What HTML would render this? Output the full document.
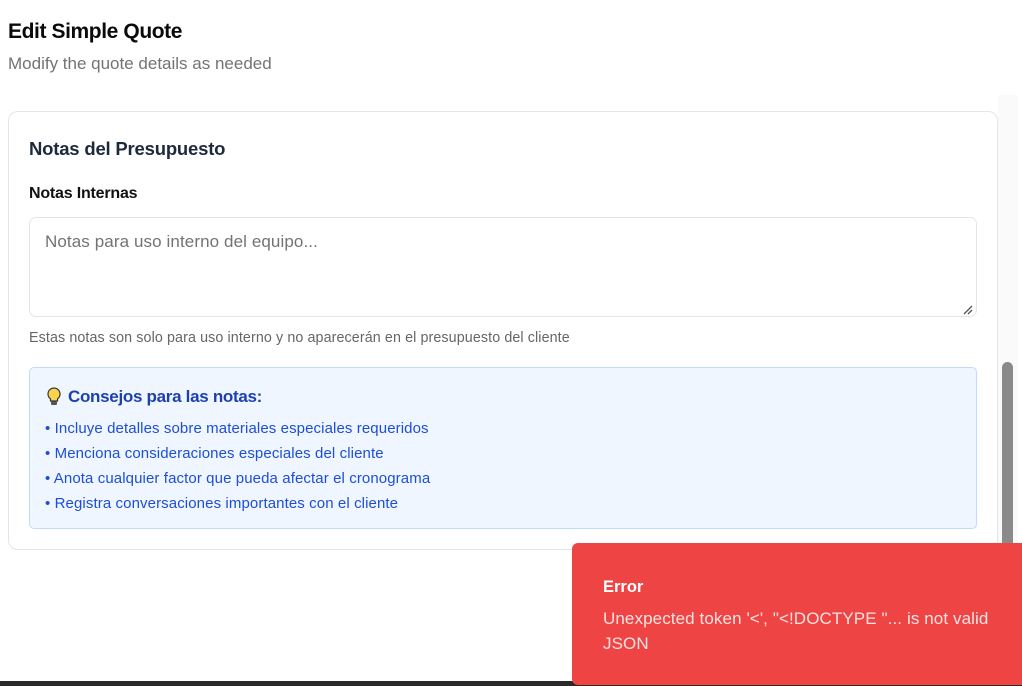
<!DOCTYPE html>
<html><head><meta charset="utf-8"><style>
*{box-sizing:border-box;margin:0;padding:0}
body{width:1022px;height:686px;overflow:hidden;background:#fff;font-family:"Liberation Sans",sans-serif;position:relative}
.abs{position:absolute;white-space:nowrap}
</style></head><body>
<div class="abs" style="left:8px;top:20px;font-size:21px;font-weight:bold;color:#0a0a0a;letter-spacing:-0.4px">Edit Simple Quote</div>
<div class="abs" style="left:8px;top:54px;font-size:17px;color:#737373">Modify the quote details as needed</div>
<div class="abs" style="left:8px;top:111px;width:990px;height:439px;border:1px solid #e5e5e5;border-radius:10px"></div>
<div class="abs" style="left:29px;top:138px;font-size:18.5px;font-weight:bold;color:#1e293b;letter-spacing:-0.2px">Notas del Presupuesto</div>
<div class="abs" style="left:29px;top:185px;font-size:16px;font-weight:bold;color:#111;letter-spacing:-0.2px">Notas Internas</div>
<div class="abs" style="left:29px;top:217px;width:948px;height:100px;border:1px solid #e5e5e5;border-radius:7px"></div>
<div class="abs" style="left:45px;top:232px;font-size:17px;color:#737373;letter-spacing:0.1px">Notas para uso interno del equipo...</div>
<svg class="abs" style="left:963px;top:305px" width="10" height="10"><path d="M1 9L9 1M5 9L9 5" stroke="#555" stroke-width="1.3"/></svg>
<div class="abs" style="left:29px;top:330px;font-size:14.3px;color:#666;letter-spacing:0.1px">Estas notas son solo para uso interno y no aparecerán en el presupuesto del cliente</div>
<div class="abs" style="left:29px;top:367px;width:948px;height:162px;background:#eff6ff;border:1px solid #bfdbfe;border-radius:5px"></div>
<svg class="abs" style="left:46px;top:387px" width="16" height="20" viewBox="0 0 16 20"><path d="M8 1a6 6 0 0 0-3.5 10.9V14h7v-2.1A6 6 0 0 0 8 1z" fill="#fcd34d" stroke="#333" stroke-width="1.2"/><rect x="5" y="14.5" width="6" height="3.5" rx="1" fill="#555"/></svg>
<div class="abs" style="left:68px;top:387px;font-size:17px;font-weight:bold;color:#1e40af;letter-spacing:-0.3px">Consejos para las notas:</div>
<div class="abs" style="left:45px;top:416px;font-size:15px;line-height:25px;color:#1d4ed8;letter-spacing:0.1px">• Incluye detalles sobre materiales especiales requeridos<br>• Menciona consideraciones especiales del cliente<br>• Anota cualquier factor que pueda afectar el cronograma<br>• Registra conversaciones importantes con el cliente</div>
<div class="abs" style="left:998px;top:95px;width:20px;height:591px;background:#fafafa"></div>
<div class="abs" style="left:1002px;top:362px;width:11px;height:200px;background:#8a8a8a;border-radius:6px"></div>
<div class="abs" style="left:0;top:681px;width:1022px;height:5px;background:#2a2a2a"></div>
<div class="abs" style="left:572px;top:543px;width:460px;height:142px;background:#ef4444;border-radius:6px"></div>
<div class="abs" style="left:603px;top:578px;font-size:16.5px;font-weight:bold;color:#fff">Error</div>
<div class="abs" style="left:603px;top:606px;font-size:17px;line-height:25px;color:#fee2e2;letter-spacing:0.1px">Unexpected token '&lt;', "&lt;!DOCTYPE "... is not valid<br>JSON</div>
</body></html>
